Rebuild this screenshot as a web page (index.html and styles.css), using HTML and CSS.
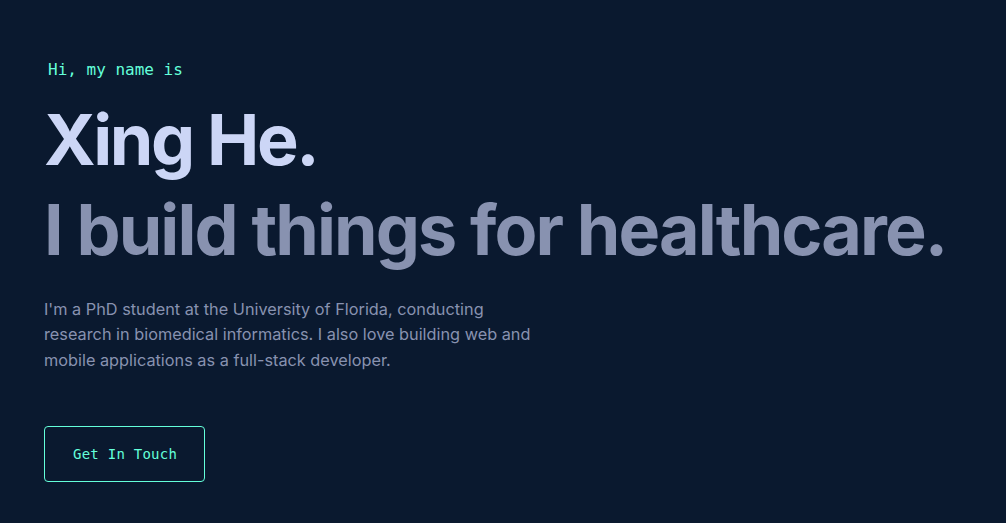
FILE: index.html
```html
<!DOCTYPE html>
<html lang="en">
<head>
<meta charset="utf-8">
<title>Xing He</title>
<link rel="stylesheet" href="styles.css">
</head>
<body>
<main class="hero">
  <h1 class="hello">Hi, my name is</h1>
  <h2 class="name">Xing He.</h2>
  <h3 class="tagline">I build things for healthcare.</h3>
  <p class="intro">I'm a PhD student at the University of Florida, conducting research in biomedical informatics. I also love building web and mobile applications as a full-stack developer.</p>
  <a class="cta" href="#contact">Get In Touch</a>
</main>
</body>
</html>
```
FILE: styles.css
```css
html, body {
  margin: 0;
  padding: 0;
  background: #0a192f;
  height: 100%;
}
.hero {
  display: flex;
  flex-direction: column;
  align-items: flex-start;
  padding: 61px 44px 0;
  font-family: Inter, "Noto Sans", sans-serif;
}
.hello {
  margin: 0 0 16px 4px;
  color: #64ffda;
  font-family: "DejaVu Sans Mono", "Liberation Mono", monospace;
  font-size: 16px;
  font-weight: 400;
  line-height: 1.1;
}
.name,
.tagline {
  margin: 0;
  font-size: 70px;
  font-weight: 700;
  line-height: 90px;
  white-space: nowrap;
}
.name {
  color: #ccd6f6;
  letter-spacing: -2.4px;
}
.tagline {
  color: #8892b0;
  letter-spacing: -1.9px;
}
.intro {
  margin: 22px 0 0;
  max-width: 500px;
  color: #8892b0;
  font-size: 16.3px;
  line-height: 25.5px;
}
.cta {
  margin-top: 53px;
  padding: 18px 27px 18px 28px;
  border: 1px solid #64ffda;
  border-radius: 4px;
  color: #64ffda;
  font-family: "DejaVu Sans Mono", "Liberation Mono", monospace;
  font-size: 14px;
  line-height: 18px;
  letter-spacing: 0.25px;
  text-decoration: none;
}
```
